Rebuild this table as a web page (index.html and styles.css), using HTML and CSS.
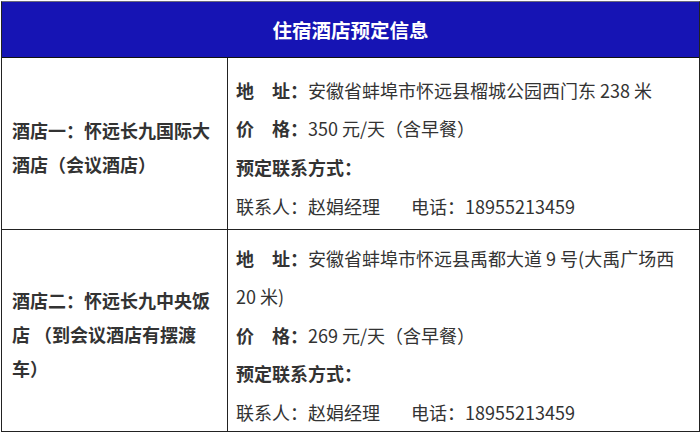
FILE: index.html
```html
<!DOCTYPE html>
<html lang="zh-CN">
<head>
<meta charset="utf-8">
<title>住宿酒店预定信息</title>
<link rel="stylesheet" href="styles.css">
</head>
<body>
<div class="sheet">
  <div class="head">住宿酒店预定信息</div>

  <div class="name">酒店一：怀远长九国际大酒店（会议酒店）</div>
  <div class="info">
    <div class="line"><b>地　址：</b>安徽省蚌埠市怀远县榴城公园西门东 238 米</div>
    <div class="line"><b>价　格：</b>350 元/天（含早餐）</div>
    <div class="line"><b>预定联系方式：</b></div>
    <div class="line">联系人：赵娟经理<span class="phone">电话：18955213459</span></div>
  </div>

  <div class="name last">酒店二：怀远长九中央饭店 （到会议酒店有摆渡车）</div>
  <div class="info last">
    <div class="line"><b>地　址：</b>安徽省蚌埠市怀远县禹都大道 9 号(大禹广场西20 米)</div>
    <div class="line"><b>价　格：</b>269 元/天（含早餐）</div>
    <div class="line"><b>预定联系方式：</b></div>
    <div class="line">联系人：赵娟经理<span class="phone">电话：18955213459</span></div>
  </div>
</div>
</body>
</html>
```

FILE: styles.css
```css
* {
  box-sizing: border-box;
}

html, body {
  margin: 0;
  padding: 0;
  background: #ffffff;
}

body {
  font-family: "Noto Sans CJK SC", "Microsoft YaHei", sans-serif;
  color: #333333;
}

.sheet {
  margin: 1px 0 0 1px;
  width: 699px;
  border: 1px solid #222222;
  border-top-color: #6a6a7a;
  display: grid;
  grid-template-columns: 226px 1fr;
  grid-template-rows: 56px 172px 201px;
}

.head {
  grid-column: 1 / span 2;
  background: #1614b4;
  color: #ffffff;
  font-weight: 700;
  font-size: 19.5px;
  line-height: 55px;
  text-align: center;
  border-bottom: 1px solid #111111;
}

.name {
  display: flex;
  align-items: center;
  padding: 6px 16px 0 10px;
  font-size: 18px;
  font-weight: 700;
  line-height: 34px;
  color: #333333;
  border-right: 1px solid #222222;
  border-bottom: 1px solid #222222;
}

.info {
  display: flex;
  flex-direction: column;
  justify-content: center;
  padding: 9px 12px 0 8px;
  font-size: 18px;
  line-height: 38.6px;
  border-bottom: 1px solid #222222;
}

.name.last,
.info.last {
  border-bottom: none;
}

.line b {
  font-weight: 700;
  color: #333333;
}

.phone {
  margin-left: 31px;
}
```
